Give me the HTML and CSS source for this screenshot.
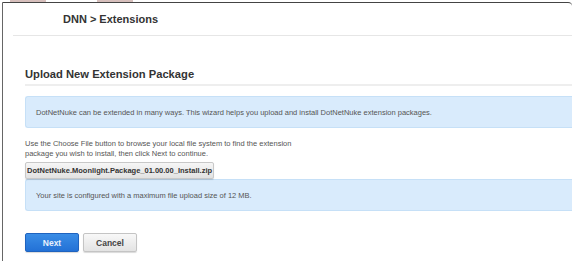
FILE: index.html
```html
<!DOCTYPE html>
<html lang="en">
<head>
    <meta charset="UTF-8">
    <title>DNN &gt; Extensions</title>
    <link rel="stylesheet" href="styles.css">
</head>
<body>
    <div class="top-strip">
        <span class="strip-a"></span>
        <span class="strip-b"></span>
    </div>
    <div class="frame">
        <div class="page-header">DNN &gt; Extensions</div>
        <div class="wizard">
            <h2>Upload New Extension Package</h2>
            <div class="info-box">DotNetNuke can be extended in many ways. This wizard helps you upload and install DotNetNuke extension packages.</div>
            <p class="help">Use the Choose File button to browse your local file system to find the extension package you wish to install, then click Next to continue.</p>
            <div class="file-btn">DotNetNuke.Moonlight.Package_01.00.00_Install.zip</div>
            <div class="info-box">Your site is configured with a maximum file upload size of 12 MB.</div>
            <div class="actions">
                <button class="btn btn-primary">Next</button>
                <button class="btn">Cancel</button>
            </div>
        </div>
    </div>
</body>
</html>
```

FILE: styles.css
```css
body {
    margin: 0;
    background-color: #fff;
    font-family: "Liberation Sans", Arial, sans-serif;
    color: #333;
}
.top-strip {
    display: flex;
    height: 2px;
}
.strip-a {
    width: 36px;
    margin-left: 10px;
    background-color: #7a2a22;
    opacity: 0.3;
}
.strip-b {
    width: 36px;
    margin-left: 51px;
    background-color: #7a2a22;
    opacity: 0.3;
}
.frame {
    margin-left: 2px;
    height: 258px;
    border-top: 1px solid #444;
    border-left: 1px solid #666;
    border-top-right-radius: 4px;
    overflow: hidden;
}
.page-header {
    display: flex;
    align-items: center;
    height: 32px;
    margin-left: 10px;
    padding-left: 50px;
    border-bottom: 1px solid #e6e6e6;
    font-size: 11px;
    font-weight: bold;
    color: #333;
}
.wizard {
    padding-left: 22px;
}
h2 {
    margin: 31px 0 0;
    padding-bottom: 3px;
    border-bottom: 2px solid #eee;
    font-size: 11.2px;
    line-height: 14px;
    color: #333;
}
.info-box {
    display: flex;
    align-items: center;
    height: 30px;
    padding-left: 10px;
    background-color: #d9ebfc;
    border: 1px solid #c6e0f7;
    border-right: none;
    border-radius: 3px 0 0 3px;
    font-size: 7.5px;
    color: #555;
}
h2 + .info-box {
    margin-top: 10px;
}
.help {
    width: 275px;
    margin: 11px 0 0;
    font-size: 7.5px;
    line-height: 10px;
    color: #555;
}
.file-btn {
    display: inline-block;
    margin-top: 2px;
    padding: 0 1px;
    height: 15px;
    line-height: 15px;
    border: 1px solid #c8c8c8;
    border-radius: 2px;
    background: linear-gradient(#f6f6f6, #e2e2e2);
    box-shadow: 0 1px 1px rgba(0,0,0,0.15);
    font-size: 7.5px;
    font-weight: bold;
    color: #333;
}
.actions {
    display: flex;
    gap: 4px;
    margin-top: 22px;
}
.btn {
    width: 54px;
    height: 19px;
    padding: 0;
    border: 1px solid #c4c4c4;
    border-radius: 2px;
    background: linear-gradient(#f8f8f8, #e3e3e3);
    box-shadow: 0 1px 1px rgba(0,0,0,0.15);
    font-family: "Liberation Sans", Arial, sans-serif;
    font-size: 8.5px;
    font-weight: bold;
    color: #444;
}
.btn-primary {
    border-color: #1f63bf;
    background: linear-gradient(#3a8de6, #2371d6);
    color: #e8f1fc;
}
```
